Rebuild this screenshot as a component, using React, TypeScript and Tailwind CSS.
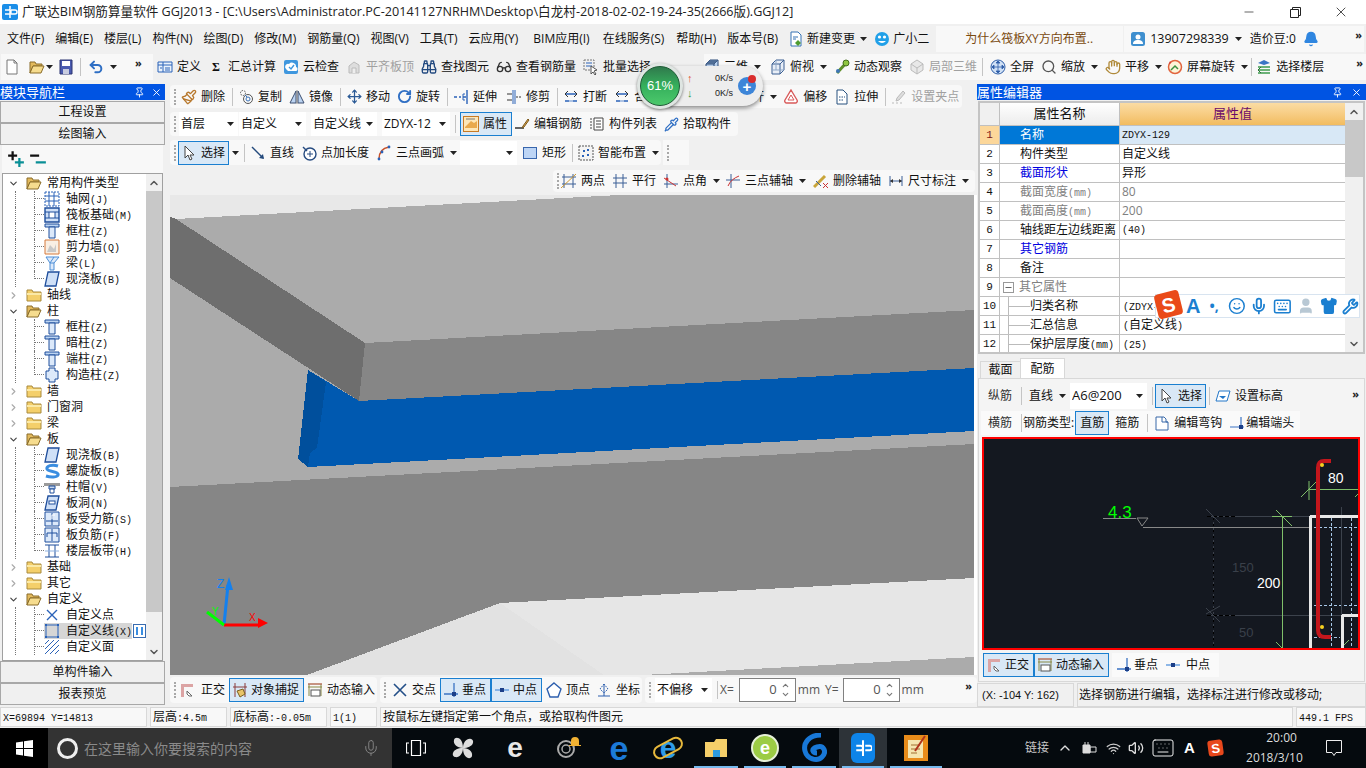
import type { ReactNode } from "react";
import { Binoculars, Glasses, Hand, Search, Undo2, Move, RotateCw, Paintbrush, Pipette, Mic, Keyboard, Smile, Shirt, Wrench, Bell, Pin, X, Minus, ChevronDown, ChevronRight, ChevronUp, User, Wifi, Volume2 } from "lucide-react";

const S = ({ children, s = 16 }: { children: ReactNode; s?: number }) => (
  <svg width={s} height={s} viewBox="0 0 16 16" className="shrink-0">
    {children}
  </svg>
);

const B = "#2a62b8";
const LB = "#bcd4f2";

const icons: Record<string, ReactNode> = {
  doc: <S><path d="M3 1h7l3 3v11H3z" fill="#fff" stroke="#777" /><path d="M10 1v3h3" fill="none" stroke="#777" /></S>,
  open: <S><path d="M1 3h5l1 2h6v2H4l-3 7z" fill="#e2b95c" stroke="#8a6d2a" /><path d="M4 7h11l-3 7H1z" fill="#f6dc8e" stroke="#8a6d2a" /></S>,
  save: <S><path d="M2 1h12v14H2z" fill="#4a5bb0" stroke="#2d3570" /><path d="M4 2h8v5H4z" fill="#fff" /><path d="M5 10h6v5H5z" fill="#c8cce0" /></S>,
  define: <S><path d="M1 3h14v10H1z" fill="#eaf2fb" stroke={B} /><path d="M1 6h14M6 3v10M3 9h2M8 9h5M8 11h5" stroke={B} fill="none" /></S>,
  cloud: <S><rect x="1" y="1" width="14" height="14" rx="2" fill="#3f97de" /><path d="M3 10a3 3 0 0 1 3-5 4 4 0 0 1 7 3 2 2 0 0 1-1 4H5z" fill="#fff" /><path d="M6 8l2 2 3-4" stroke="#3f97de" strokeWidth="1.4" fill="none" /></S>,
  align: <S><path d="M3 14V7l5-4 5 3v8z" fill="#ddd" stroke="#bbb" /><path d="M6 14V9h4v5" fill="#eee" stroke="#bbb" /></S>,
  batch: <S><path d="M1 1h10v10H1z" fill="none" stroke="#777" strokeDasharray="2 1" /><path d="M3 4h6M3 7h6" stroke={B} /><path d="M8 7l6 4-3 1 2 3-1 1-2-3-2 2z" fill="#fff" stroke="#555" /></S>,
  cube: <S><path d="M2 5l4-4h8v10l-4 4H2z" fill={LB} stroke="#2b4a78" /><path d="M2 5h8v10M10 5l4-4" fill="none" stroke="#2b4a78" /><path d="M2 5l4-4h8l-4 4z" fill="#4f6d96" /></S>,
  cube2: <S><path d="M2 5l4-4h8v10l-4 4H2z" fill="#e8eef7" stroke="#3b5f92" /><path d="M2 5h8v10M10 5l4-4" fill="none" stroke="#3b5f92" /><path d="M6 1v10H2M6 11l8 0" fill="none" stroke="#8fa8c8" /></S>,
  orbit: <S><path d="M3 14L13 3" stroke="#5e8f2a" strokeWidth="3" /><circle cx="12" cy="4" r="3" fill="#8fc640" stroke="#446d1d" /><circle cx="4" cy="12" r="2" fill="#3f76b8" /></S>,
  cubeGray: <S><path d="M8 1l6 4v6l-6 4-6-4V5z" fill="#e8e8e8" stroke="#bbb" /><path d="M2 5l6 4 6-4M8 9v6" stroke="#bbb" fill="none" /></S>,
  full: <S><circle cx="8" cy="8" r="7" fill="#cfe0f5" stroke="#2f5ea8" /><path d="M8 2v12M2 8h12M8 2l-2 2h4zM8 14l-2-2h4zM2 8l2-2v4zM14 8l-2-2v4z" fill="#2f5ea8" stroke="#2f5ea8" strokeWidth=".8" /></S>,
  rot: <S><circle cx="8" cy="8" r="6.5" fill="#fdf3d8" stroke="#e1643e" strokeWidth="1.5" /><path d="M4 11l4-4 3 3" stroke="#3a8f3f" fill="none" strokeWidth="1.5" /><path d="M4 4l-2 1 1-3z" fill="#c33" /></S>,
  floors: <S><path d="M2 4l6-3 6 3-6 2z" fill="#3a75c4" /><path d="M2 8h12M2 11h12M2 14h12" stroke="#3e9a4d" strokeWidth="1.6" /><path d="M5 8l-3 3 3 3" fill="none" stroke="#2b6f36" /></S>,
  copy: <S><circle cx="5" cy="4" r="2.5" fill="none" stroke="#555" strokeDasharray="1.5 1" /><circle cx="10" cy="10" r="4.5" fill="none" stroke="#555" /><circle cx="10" cy="10" r="2" fill="none" stroke="#3a72b8" /><path d="M7 6l2 2" stroke="#3a72b8" /></S>,
  mirror: <S><path d="M7 2v12H1zM9 2v12h6z" fill={LB} stroke="#3c4f70" /><path d="M8 1v14" stroke="#888" /></S>,
  extend: <S><path d="M14 1v14M1 8h3M6 8h2M10 8h3" stroke={B} strokeWidth="1.4" /><path d="M12 5h-2v6h2" stroke={B} fill="none" /></S>,
  trim: <S><path d="M7 1v14M9 1v14" stroke={B} /><path d="M1 5h5M1 11h5M10 8h2M13 8h2" stroke="#333" /></S>,
  brk: <S><path d="M2 5h12M2 12h12" stroke={B} strokeWidth="1.4" /><path d="M5 2L2 5l3 3M11 2l3 3-3 3" stroke="#333" fill="none" /><path d="M6 12h4" stroke="#fff" /></S>,
  offset: <S><path d="M8 1l6 10a2 2 0 0 1-2 3H4a2 2 0 0 1-2-3z" fill="#fff" stroke="#d85a5a" strokeWidth="1.4" /><path d="M8 6l3 5H5z" fill="none" stroke="#d85a5a" /></S>,
  stretch: <S><path d="M3 1h6l4 4v10H3z" fill="#fff" stroke="#27517f" /><path d="M5 8h6M5 11h4" stroke="#27517f" strokeDasharray="1.5 1" /></S>,
  grip: <S><path d="M12 2l2 2-6 7-3 1 1-3zM1 14h2M5 14h2M9 14h2" stroke="#bbb" fill="#ddd" /></S>,
  prop: <S><rect x=".5" y=".5" width="15" height="15" fill="#fde6b8" stroke="#c87a24" /><path d="M2 11l6-6 3 2 3-2v7H2z" fill="#e9a94d" /><path d="M3 3h9" stroke="#777" /></S>,
  editbar: <S><path d="M1 12h9" stroke="#333" strokeWidth="1.5" /><path d="M9 10l5-7 1 1-5 7-2 1z" fill="#e0a84c" stroke="#7b5a20" /></S>,
  list: <S><path d="M5 2h9v12H5z" fill="#fff" stroke="#444" /><path d="M1 3h2M1 6h2M1 9h2M1 12h2M7 5h5M7 8h5M7 11h5" stroke="#444" /></S>,
  cursor: <S><path d="M4 1v12l3-3 2 5 2-1-2-4h4z" fill="#fff" stroke="#444" /></S>,
  line: <S><path d="M2 2l11 11" stroke="#244a7c" strokeWidth="1.5" /><path d="M14 14l-5-1 4-4z" fill="#244a7c" /></S>,
  ptlen: <S><circle cx="9" cy="9" r="6" fill="#fff" stroke="#264b80" strokeWidth="1.4" /><path d="M9 6v6M6 9h6" stroke="#264b80" /><path d="M2 2l4 4" stroke="#264b80" strokeWidth="1.4" /></S>,
  arc: <S><path d="M3 14C3 7 7 3 13 2" fill="none" stroke="#c8512a" strokeWidth="1.5" /><circle cx="3" cy="14" r="1.4" fill="#2a62b8" /><circle cx="13" cy="2" r="1.4" fill="#2a62b8" /><circle cx="6" cy="7" r="1.4" fill="#2a62b8" /></S>,
  rect: <S><rect x="1.5" y="2.5" width="13" height="11" fill="#bdd5f5" stroke="#3866ad" /></S>,
  smart: <S><path d="M1 1h14v14H1z" fill="#f4f4f4" stroke="#555" strokeDasharray="2 1" /><path d="M5 5h2v2H5zM9 9h2v2H9zM9 4h2v2H9zM4 10h2v2H4z" fill="#2a62b8" /></S>,
  twopt: <S><path d="M3 1v14M12 1v14M1 4h14M1 11h14" stroke="#3a5f96" /><path d="M0 15L15 1" stroke="#c93" /></S>,
  para: <S><path d="M4 1v14M11 1v14M1 5h14M1 10h14" stroke="#3a5f96" /></S>,
  ang: <S><path d="M4 1v14M1 11h14" stroke="#3a5f96" /><path d="M1 5l12 8" stroke="#c33" /><circle cx="4" cy="6" r="1.5" fill="#c33" /></S>,
  axis3: <S><path d="M6 1v14M1 7h14" stroke="#3a5f96" /><path d="M3 13C5 8 9 5 14 3" stroke="#c33" fill="none" /></S>,
  delaxis: <S><path d="M1 14L12 3" stroke="#c9a53a" strokeWidth="3" /><path d="M3 8l5 5" stroke="#3a5f96" /><path d="M10 10l5 5M15 10l-5 5" stroke="#c33" /></S>,
  dim: <S><path d="M2 3v10M14 3v10M2 8h12" stroke="#3a5f96" /><path d="M2 8l3-2v4zM14 8l-3-2v4z" fill="#333" /></S>,
  ortho: <S><path d="M2 2h12v3H5v10H2z" fill="#dca4a4" /><path d="M8 9l5 5-3 0-2-2z" fill="#fff" stroke="#666" /></S>,
  snap: <S><path d="M3 1v14M13 1v14M1 5h14" stroke="#8a3a3a" /><path d="M5 9l6-2 2 5-5 3z" fill="#e9c468" stroke="#7a5f20" /></S>,
  dyn: <S><path d="M1 2h14M1 5h14M2 2v12M14 2v12" stroke="#884" /><path d="M1 2h14" stroke="#c66" /><rect x="4" y="8" width="9" height="6" fill="#fff" stroke="#555" /></S>,
  cross: <S><path d="M2 2l12 12M14 2L2 14" stroke="#234f88" strokeWidth="1.6" /></S>,
  perp: <S><path d="M1 12h14M11 1v14" stroke="#3a73c4" strokeWidth="1.3" /><rect x="9" y="10" width="4" height="4" fill="#1c3f88" /></S>,
  mid: <S><path d="M1 8h14" stroke="#6aa0e0" strokeWidth="1.5" /><rect x="6" y="6" width="4" height="4" fill="#1c3f88" /></S>,
  vertex: <S><path d="M8 1l7 6-3 8H4L1 7z" fill="#fff" stroke="#2d5fae" strokeWidth="1.4" /></S>,
  coord: <S><path d="M8 2v12M2 14h12" stroke="#2d5fae" /><path d="M8 2l-4 5 4 4 4-4z" fill="none" stroke="#2d5fae" strokeDasharray="1.5 1" /></S>,
  height: <S><path d="M4 3h11l-3 10H1z" fill="#fff" stroke="#2276c8" /><path d="M4 8h7l-3 3z" fill="#2276c8" /></S>,
  hook: <S><path d="M2 2h8l2 2v3h2v8H2z" fill="#fff" stroke="#3969a8" /><path d="M8 2v5h6" fill="none" stroke="#3969a8" /></S>,
  end: <S><path d="M1 12h14M12 2v12" stroke="#3a73c4" strokeWidth="1.2" /><rect x="10" y="10" width="4" height="4" fill="#1c3f88" /></S>,
  newchg: <S><path d="M3 1h7l3 3v11H3z" fill="#fff" stroke="#3673b4" /><path d="M5 6h5M5 8h3" stroke="#3673b4" /><path d="M10 9l3 3-3 3-3-3z" fill="#4f9c2f" /></S>,
  mascot: <S><circle cx="8" cy="8" r="7" fill="#21a0e8" /><circle cx="5.5" cy="6" r="1.6" fill="#fff" /><circle cx="10.5" cy="6" r="1.6" fill="#fff" /><path d="M4 10q4 4 8 0z" fill="#fff" /></S>,
  phone: <S><rect x="1" y="1" width="14" height="14" rx="2.5" fill="#3f8fcf" /><circle cx="8" cy="6" r="2.5" fill="#fff" /><path d="M3 13c0-3 2-4 5-4s5 1 5 4z" fill="#fff" /></S>,
  brand: <S><rect width="16" height="16" rx="2" fill="#1a8ee8" /><path d="M8 2v12M3 6h4a2 2 0 0 1 0 4H3M13 6H9M9 10h4a2 2 0 0 0 0-4" stroke="#fff" strokeWidth="1.5" fill="none" /></S>,
  plus: <S s={18}><path d="M5 1v8M1 5h8" stroke="#111" strokeWidth="2" /><path d="M11 7v8M7 11h8" stroke="#0a8f96" strokeWidth="2" /></S>,
  minus: <S s={18}><path d="M1 5h8" stroke="#111" strokeWidth="2" /><path d="M6 11h9" stroke="#0a8f96" strokeWidth="2" /></S>,
  grid: <S><path d="M1 1h14v14H1z" fill="none" stroke="#2a62b8" strokeDasharray="2 1" /><path d="M5 1v14M10 1v14M1 5h14M1 10h14" stroke="#2a62b8" /></S>,
  raft: <S><path d="M1 1h14v14H1z" fill="#cfe0f7" stroke="#1f4e9c" strokeWidth="1.4" /><path d="M5 5h6v6H5z" fill="#fff" stroke="#1f4e9c" /><path d="M1 5h4M11 5h4M1 11h4M11 11h4" stroke="#1f4e9c" /></S>,
  col: <S><path d="M1 1h14v3H1z" fill="#bcd4f2" stroke="#1f4e9c" /><path d="M5 4h6v11H5z" fill="#dce9fa" stroke="#1f4e9c" /></S>,
  wall: <S><path d="M1 1h14v14H1z" fill="#f9efe4" stroke="#d67a3c" /><path d="M3 13L6 6l4 4 2-5v8z" fill="#c8c8c8" /></S>,
  beam: <S><path d="M2 2h13l-5 6v7H6V8z" fill="#dce9fa" stroke="#4c8ed6" /><path d="M6 8h4M10 2l-4 6" stroke="#4c8ed6" /></S>,
  slab: <S><path d="M4 1h11l-3 14H1z" fill="#cfe0f7" stroke="#1f4e9c" strokeWidth="1.3" /></S>,
  gz: <S><path d="M5 1h6v3h3v8h-3v3H5v-3H2V4h3z" fill="#dce9fa" stroke="#1f4e9c" /></S>,
  spiral: <S><path d="M14 3C8 1 2 3 3 6s10 2 11 5-6 4-12 2" fill="none" stroke="#3a8de0" strokeWidth="3" /></S>,
  cap: <S><path d="M0 4h16v3H0z" fill="#9a9a9a" /><path d="M5 7h6v3H5z" fill="#c8d8ee" stroke="#1f4e9c" /><path d="M6 10h4v4H6z" fill="#fff" stroke="#1f4e9c" /></S>,
  hole: <S><path d="M4 1h11l-3 14H1z" fill="#cfe0f7" stroke="#1f4e9c" strokeWidth="1.3" /><rect x="5" y="6" width="6" height="3" fill="#fff" stroke="#1f4e9c" /></S>,
  rebar: <S><path d="M1 1h14v14H1z" fill="#dce9fa" stroke="#1f4e9c" /><path d="M8 2v12M2 10h12" stroke="#1f4e9c" /><path d="M11 4H8v4" stroke="#fff" fill="none" /></S>,
  neg: <S><path d="M1 1h14v14H1z" fill="#dce9fa" stroke="#1f4e9c" /><path d="M3 6h10v4M3 10V6M8 2v12" stroke="#1f4e9c" fill="none" /></S>,
  band: <S><path d="M1 2h14M1 14h14M5 2v12M11 2v12" stroke="#1f4e9c" /><path d="M1 8h14" stroke="#8fb2e0" /></S>,
  point: <S><path d="M3 3l10 10M13 3L3 13" stroke="#2a62b8" strokeWidth="1.4" /></S>,
  cline: <S><path d="M2 2h12v12H2z" fill="none" stroke="#2a62b8" /><path d="M1 1h2v2H1zM13 1h2v2h-2zM1 13h2v2H1zM13 13h2v2h-2z" fill="#2a62b8" /></S>,
  face: <S><path d="M1 5L5 1M1 10l9-9M1 15L15 1M6 15l9-9M11 15l4-4" stroke="#2a62b8" /></S>,
};

const Caret = ({ className = "" }: { className?: string }) => (
  <svg width="7" height="4" viewBox="0 0 7 4" className={`shrink-0 ${className}`}>
    <path d="M0 0h7L3.5 4z" fill="#222" />
  </svg>
);

const Sep = ({ className = "" }: { className?: string }) => <div className={`w-px h-[18px] bg-[#c4c4c4] shrink-0 ${className}`} />;

const Grip = () => <div className="w-[3px] h-[16px] shrink-0 border-l-2 border-dotted border-[#a8a8a8] ml-[4px]" />;

const More = () => <span className="text-[11px] leading-none font-bold text-[#222] tracking-[-1px]">»</span>;

function Tool({ icon, label, gray, caret, on, gap = "gap-[4px]", className = "" }: { icon?: ReactNode; label: string; gray?: boolean; caret?: boolean; on?: boolean; gap?: string; className?: string }) {
  return (
    <div className={`flex items-center shrink-0 ${gap} whitespace-nowrap ${gray ? "text-[#a0a0a0]" : "text-[#111]"} ${on ? "bg-[#d9e8f6] border border-[#1a7fd0] h-[24px] px-[2px]" : ""} ${className}`}>
      {icon}
      <span>{label}</span>
      {caret && <Caret className="ml-[2px]" />}
    </div>
  );
}

function Drop({ label, className = "" }: { label: string; className?: string }) {
  return (
    <div className={`h-[24px] bg-white flex items-center justify-between pl-[2px] pr-[4px] shrink-0 ${className}`}>
      <span className="whitespace-nowrap overflow-hidden">{label}</span>
      <Caret />
    </div>
  );
}

// ascii in simsun-width mono, the rest in the cjk font
function Sim({ text }: { text: string }) {
  const parts = text.split(/([\x20-\x7e]+)/).filter(Boolean);
  return (
    <>
      {parts.map((p, i) =>
        /^[\x20-\x7e]+$/.test(p) ? (
          <span key={i} className="font-['Liberation_Mono',monospace] text-[10px]">{p}</span>
        ) : (
          <span key={i}>{p}</span>
        )
      )}
    </>
  );
}

const Folder = ({ open }: { open?: boolean }) =>
  open ? (
    icons.open
  ) : (
    <S><path d="M1 3h5l1 2h8v9H1z" fill="#f4cf6a" stroke="#a98a3c" /><path d="M1 6h14v2H1z" fill="#fbe9a6" /></S>
  );

function Group({ label, open }: { label: string; open?: boolean }) {
  return (
    <div className="h-4 flex items-center">
      <div className="w-[23px] flex justify-end pr-[7px] text-[#666]">
        {open ? <ChevronDown size={11} strokeWidth={2.5} className="text-[#444]" /> : <ChevronRight size={11} strokeWidth={2.5} className="text-[#aaa]" />}
      </div>
      <Folder open={open} />
      <span className="ml-[5px] whitespace-nowrap">{label}</span>
    </div>
  );
}

function Leaf({ icon, label, last, sel }: { icon: string; label: string; last?: boolean; sel?: boolean }) {
  return (
    <div className="h-4 flex items-stretch">
      <div className="ml-[12px] w-[19px] border-l border-dotted border-[#777] shrink-0" />
      {last ? (
        <div className="w-[10px] h-[8px] border-l border-b border-dotted border-[#777] shrink-0" />
      ) : (
        <div className="w-[10px] border-l border-dotted border-[#777] shrink-0">
          <div className="h-[8px] border-b border-dotted border-[#777]" />
        </div>
      )}
      <div className={`flex items-center ${sel ? "bg-[#d6d6d6] w-[88px]" : ""}`}>
        {icons[icon]}
        <span className="ml-[6px] whitespace-nowrap"><Sim text={label} /></span>
      </div>
      {sel && (
        <svg width="13" height="14" viewBox="0 0 13 14" className="ml-[1px] self-center shrink-0">
          <rect x=".5" y=".5" width="12" height="13" fill="#fff" stroke="#3a6cb0" />
          <path d="M3 3h2v8H3zM8 3h2v8H8z" fill="#3a8de0" />
        </svg>
      )}
    </div>
  );
}

function NavButton({ label }: { label: string }) {
  return <div className="h-[22px] border border-[#a8a8a8] bg-[#f0f0f0] flex items-center justify-center text-[#111] shrink-0">{label}</div>;
}

function LeftPanel() {
  return (
    <div className="w-[165px] flex flex-col shrink-0 pb-[2px]">
      <div className="h-[16px] mb-[1px] bg-[#0054e3] text-white text-[13px] flex items-center justify-between pr-[3px] leading-none shrink-0">
        <span>模块导航栏</span>
        <div className="flex items-center gap-[6px]">
          <Pin size={11} />
          <X size={11} />
        </div>
      </div>
      <NavButton label="工程设置" />
      <NavButton label="绘图输入" />
      <div className="h-[28px] mx-[2px] bg-[#f8f8f8] flex items-center pl-[5px] gap-[4px] shrink-0">
        {icons.plus}
        {icons.minus}
      </div>
      <div className="flex-1 mx-[2px] border border-[#a0a0a0] bg-white flex min-h-0">
        <div className="flex-1 overflow-hidden pt-[1px] text-[#111]">
          <Group label="常用构件类型" open />
          <Leaf icon="grid" label="轴网(J)" />
          <Leaf icon="raft" label="筏板基础(M)" />
          <Leaf icon="col" label="框柱(Z)" />
          <Leaf icon="wall" label="剪力墙(Q)" />
          <Leaf icon="beam" label="梁(L)" />
          <Leaf icon="slab" label="现浇板(B)" last />
          <Group label="轴线" />
          <Group label="柱" open />
          <Leaf icon="col" label="框柱(Z)" />
          <Leaf icon="col" label="暗柱(Z)" />
          <Leaf icon="col" label="端柱(Z)" />
          <Leaf icon="gz" label="构造柱(Z)" last />
          <Group label="墙" />
          <Group label="门窗洞" />
          <Group label="梁" />
          <Group label="板" open />
          <Leaf icon="slab" label="现浇板(B)" />
          <Leaf icon="spiral" label="螺旋板(B)" />
          <Leaf icon="cap" label="柱帽(V)" />
          <Leaf icon="hole" label="板洞(N)" />
          <Leaf icon="rebar" label="板受力筋(S)" />
          <Leaf icon="neg" label="板负筋(F)" />
          <Leaf icon="band" label="楼层板带(H)" last />
          <Group label="基础" />
          <Group label="其它" />
          <Group label="自定义" open />
          <Leaf icon="point" label="自定义点" />
          <Leaf icon="cline" label="自定义线(X)" sel />
          <Leaf icon="face" label="自定义面" />
        </div>
        <div className="w-[16px] bg-[#f0f0f0] flex flex-col shrink-0 items-stretch">
          <div className="h-[17px] flex items-center justify-center"><ChevronUp size={12} strokeWidth={3} className="text-[#555]" /></div>
          <div className="flex-1 flex flex-col">
            <div className="h-[421px] bg-[#c8c8c8]" />
          </div>
          <div className="h-[17px] flex items-center justify-center"><ChevronDown size={12} strokeWidth={3} className="text-[#555]" /></div>
        </div>
      </div>
      <NavButton label="单构件输入" />
      <NavButton label="报表预览" />
    </div>
  );
}

function Scene() {
  return (
    <svg width="804" height="480" viewBox="170 195 804 480" className="block shrink-0" shapeRendering="crispEdges">
      <rect x="170" y="195" width="804" height="480" fill="#ababab" />
      <polygon points="170,195 619,195 176,219 170,218" fill="#e8e8e8" />
      <polygon points="170,217 176,219 365,343 359,401 170,278" fill="#6e6e6e" />
      <polygon points="365,343 974,310 974,368 359,401" fill="#868686" />
      <polygon points="308,370 359,401 974,368 974,431 308,467" fill="#0059b0" />
      <polygon points="308,370 326,382 317,448 310,453 308,467 298,459" fill="#004f9c" />
      <polygon points="170,487 974,444 974,578 500,603 307,675 170,675" fill="#868686" />
      <polygon points="500,603 974,578 974,657 643,675 307,675" fill="#e6e6e6" />
      <polygon points="500,603 604,675 307,675" fill="#e2e2e2" />
      <g shapeRendering="auto">
        <path d="M224 625L228 585" stroke="#1380ee" strokeWidth="3" />
        <path d="M229 577l-4 13h8z" fill="#1380ee" />
        <text x="217" y="588" fill="#1380ee" fontSize="12" fontFamily="Liberation Sans">Z</text>
        <path d="M224 625H258" stroke="#f00" strokeWidth="3" />
        <path d="M268 623l-10-5v10z" fill="#f00" />
        <text x="249" y="621" fill="#f00" fontSize="10" fontFamily="Liberation Sans">X</text>
        <path d="M224 625L207 612" stroke="#0f0" strokeWidth="3" />
        <text x="212" y="615" fill="#0f0" fontSize="10" fontFamily="Liberation Sans">Y</text>
      </g>
    </svg>
  );
}

function RebarView() {
  return (
    <div className="h-[213px] ml-[3px] mr-[4px] border-2 border-[#f00] bg-[#141820] overflow-hidden shrink-0">
      <svg width="374" height="209" viewBox="984 439 374 209" className="block" shapeRendering="crispEdges">
        <path d="M1207 516H1358M1207 615H1341" stroke="#3c424c" />
        <path d="M1207 516h30M1207 615h30" stroke="#000" strokeDasharray="4 2" />
        <path d="M1213 516V648" stroke="#000" strokeDasharray="4 2" />
        <path d="M1213 516V648" stroke="#3c424c" strokeDasharray="2 4" />
        <path d="M1143 527H1309" stroke="#888" />
        <path d="M1103 518H1136" stroke="#888" />
        <path d="M1137 518H1148L1142 526z" fill="none" stroke="#888" shapeRendering="auto" />
        <path d="M1282 516V648M1272 516H1292M1309 489H1358" stroke="#7fbf6a" />
        <path d="M1276 510L1292 526M1309 481V500M1301 497L1316 482M1355 497l4-4M1276 642l6 6M1341 648l8-8" stroke="#7fbf6a" shapeRendering="auto" />
        <path d="M1206 509l14 14M1206 614l14 -8M1206 608l14 14" stroke="#3c424c" shapeRendering="auto" />
        <path d="M1331 518V648M1351 518V648M1309 527H1358M1309 605H1358M1309 637H1340" stroke="#a8c8e8" strokeDasharray="3 2" />
        <path d="M1341 507V615" stroke="#3c424c" />
        <path d="M1310 516V648M1310 516H1358M1342 615V648M1342 615H1358" stroke="#e8e8e8" strokeWidth="3" />
        <path d="M1331 461H1324Q1318 461 1318 468V630Q1318 637 1325 637H1331" fill="none" stroke="#c4161c" strokeWidth="4" shapeRendering="auto" />
        <circle cx="1322" cy="465" r="2" fill="#f5d020" shapeRendering="auto" />
        <circle cx="1322" cy="627" r="2" fill="#f5d020" shapeRendering="auto" />
        <g shapeRendering="auto" fontFamily="Liberation Sans" fontSize="14">
          <text x="1108" y="518" fill="#0f0" fontSize="17">4.3</text>
          <text x="1328" y="483" fill="#fff">80</text>
          <text x="1257" y="588" fill="#fff">200</text>
          <text x="1232" y="572" fill="#3a404a" fontSize="13">150</text>
          <text x="1239" y="637" fill="#3a404a" fontSize="13">50</text>
        </g>
      </svg>
    </div>
  );
}

const rows: { n: number; name: string; val?: string; color?: string; vColor?: string }[] = [
  { n: 2, name: "构件类型", val: "自定义线" },
  { n: 3, name: "截面形状", val: "异形", color: "text-[#0000e0]" },
  { n: 4, name: "截面宽度(mm)", val: "80", color: "text-[#808080]", vColor: "text-[#808080]" },
  { n: 5, name: "截面高度(mm)", val: "200", color: "text-[#808080]", vColor: "text-[#808080]" },
  { n: 6, name: "轴线距左边线距离", val: "(40)" },
  { n: 7, name: "其它钢筋", color: "text-[#0000e0]" },
  { n: 8, name: "备注" },
];

const treeRows = [
  { n: 10, name: "归类名称", val: "(ZDYX-" },
  { n: 11, name: "汇总信息", val: "(自定义线)" },
  { n: 12, name: "保护层厚度(mm)", val: "(25)" },
];

const rowLine = "h-[19px] flex border-b border-[#c0c0c0] shrink-0";
const numCell = "w-[20px] border-r border-[#c0c0c0] flex items-center justify-center text-[11px] font-['Liberation_Mono',monospace] shrink-0";

function PropGrid() {
  return (
    <div className="h-[253px] mx-[1px] border-2 border-[#c4c4c4] bg-white flex text-[#111] overflow-hidden shrink-0">
      <div className="flex-1 flex flex-col min-w-0">
        <div className="h-[23px] flex border-b border-[#c0c0c0] shrink-0">
          <div className="w-[20px] bg-[#f0f0f0] border-r border-[#c0c0c0]" />
          <div className="w-[120px] bg-gradient-to-b from-white to-[#ececec] border-r border-[#c0c0c0] flex items-center justify-center text-[13px]">属性名称</div>
          <div className="flex-1 bg-gradient-to-b from-[#fbdca4] to-[#f2bc5e] flex items-center justify-center text-[13px] text-[#6a0a6a]">属性值</div>
        </div>
        <div className={rowLine}>
          <div className={`${numCell} bg-[#fcd79a] text-[#7a1a1a]`}>1</div>
          <div className="w-[120px] bg-[#0078d7] text-white border-r border-[#c0c0c0] pl-[20px] flex items-center">名称</div>
          <div className="flex-1 bg-[#d8e8f6] pl-[2px] flex items-center font-['Liberation_Mono',monospace] text-[10px]">ZDYX-129</div>
        </div>
        {rows.map((r) => (
          <div key={r.n} className={rowLine}>
            <div className={numCell}>{r.n}</div>
            <div className={`w-[120px] border-r border-[#c0c0c0] pl-[20px] flex items-center whitespace-nowrap ${r.color ?? ""}`}>
              <span><Sim text={r.name} /></span>
            </div>
            <div className={`flex-1 pl-[2px] flex items-center ${r.vColor ?? ""}`}>{r.val === "(40)" ? <Sim text={r.val} /> : r.val}</div>
          </div>
        ))}
        <div className={rowLine}>
          <div className={numCell}>9</div>
          <div className="w-[120px] border-r border-[#c0c0c0] pl-[3px] flex items-center gap-[5px] text-[#808080]">
            <div className="w-[11px] h-[11px] border border-[#999] flex items-center justify-center text-[#333]">
              <Minus size={9} strokeWidth={2} />
            </div>
            其它属性
          </div>
          <div className="flex-1" />
        </div>
        {treeRows.map((r) => (
          <div key={r.n} className={rowLine}>
            <div className={numCell}>{r.n}</div>
            <div className="w-[120px] border-r border-[#c0c0c0] flex items-stretch whitespace-nowrap">
              <div className="ml-[8px] w-[22px] border-l border-[#bbb] h-full shrink-0">
                <div className="h-[10px] border-b border-[#bbb]" />
              </div>
              <span className="self-center"><Sim text={r.name} /></span>
            </div>
            <div className="flex-1 pl-[3px] flex items-center"><span><Sim text={r.val} /></span></div>
          </div>
        ))}
      </div>
      <div className="w-[18px] bg-[#f0f0f0] flex flex-col shrink-0">
        <div className="h-[17px] flex items-center justify-center"><ChevronUp size={12} strokeWidth={3} className="text-[#555]" /></div>
        <div className="h-[57px] bg-[#c8c8c8]" />
        <div className="flex-1" />
        <div className="h-[17px] flex items-center justify-center"><ChevronDown size={12} strokeWidth={3} className="text-[#555]" /></div>
      </div>
    </div>
  );
}

function RightPanel() {
  return (
    <div className="w-[389px] flex flex-col shrink-0">
      <div className="h-[16px] mb-[1px] bg-[#0054e3] text-white text-[13px] flex items-center justify-between pr-[4px] leading-none shrink-0">
        <span>属性编辑器</span>
        <div className="flex items-center gap-[8px]">
          <Pin size={11} />
          <X size={11} />
        </div>
      </div>
      <PropGrid />
      <div className="h-[21px] flex items-end pl-[3px] mt-[3px] shrink-0">
        <div className="w-[40px] h-[17px] flex items-center justify-center bg-[#f0f0f0] border-t border-l border-[#d8d8d8]">截面</div>
        <div className="w-[45px] h-[21px] flex items-center justify-center bg-white border border-b-0 border-[#d8d8d8] -mb-[1px]">配筋</div>
      </div>
      <div className="h-[304px] border border-[#d8d8d8] bg-[#f4f4f4] flex flex-col shrink-0 mx-[1px]">
        <div className="h-[29px] mt-[2px] flex items-center pl-[9px] shrink-0">
          <span className="text-[#333]">纵筋</span>
          <Sep className="ml-[9px]" />
          <span className="ml-[7px]">直线</span>
          <Caret className="ml-[6px]" />
          <Drop label="A6@200" className="w-[77px] h-[26px] ml-[4px] text-[13px]" />
          <Sep className="ml-[5px]" />
          <Tool on icon={icons.cursor} label="选择" className="ml-[2px] w-[51px]" />
          <Sep className="ml-[3px]" />
          <Tool icon={icons.height} label="设置标高" className="ml-[5px]" />
          <div className="ml-auto pr-[6px] self-start pt-[4px]"><More /></div>
        </div>
        <div className="h-[24px] mt-[1px] w-[319px] ml-[2px] bg-[#fafafa] flex items-center pl-[7px] shrink-0">
          <span className="text-[#333]">横筋</span>
          <Sep className="ml-[9px]" />
          <span className="whitespace-nowrap ml-[1px]">钢筋类型:</span>
          <Tool on label="直筋" className="px-[4px] ml-[1px]" />
          <span className="ml-[6px]">箍筋</span>
          <Sep className="ml-[8px] mr-[6px]" />
          <Tool icon={icons.hook} label="编辑弯钩" />
          <Tool icon={icons.end} label="编辑端头" gap="gap-[1px]" className="ml-[7px]" />
        </div>
        <div className="h-[2px] shrink-0" />
        <RebarView />
        <div className="h-[26px] mt-[2px] flex items-center pl-[4px] shrink-0">
          <Tool on icon={icons.ortho} label="正交" gap="gap-[3px]" className="w-[51px]" />
          <Tool on icon={icons.dyn} label="动态输入" gap="gap-[3px]" className="w-[75px]" />
          <div className="h-[24px] w-[107px] bg-[#fafafa] ml-[3px] flex items-center pl-[4px]">
            <Tool icon={icons.perp} label="垂点" gap="gap-[2px]" />
            <Tool icon={icons.mid} label="中点" gap="gap-[5px]" className="ml-[7px]" />
          </div>
        </div>
      </div>
      <div className="h-[24px] mt-[1px] flex gap-[3px] text-[11px] shrink-0">
        <div className="w-[97px] border border-[#d8d8d8] flex items-center pl-[4px] font-['Liberation_Sans',sans-serif] whitespace-nowrap">(X: -104 Y: 162)</div>
        <div className="flex-1 border border-[#d8d8d8] flex items-center pl-[1px] text-[12px] whitespace-nowrap">选择钢筋进行编辑，选择标注进行修改或移动;</div>
      </div>
    </div>
  );
}

const Spin = ({ className = "" }: { className?: string }) => (
  <div className={`w-[57px] h-[24px] border border-[#808080] bg-white flex items-center justify-end text-[#555] shrink-0 ${className}`}>
    <span className="text-[13px]">0</span>
    <div className="w-[18px] flex flex-col items-center text-[#777]">
      <ChevronUp size={9} strokeWidth={3} />
      <ChevronDown size={9} strokeWidth={3} />
    </div>
  </div>
);

function CenterPanel() {
  const bar = "bg-[#f8f8f8] flex items-center shrink-0 rounded-sm";
  return (
    <div className="w-[807px] ml-[5px] flex flex-col shrink-0 text-[#111]">
      <div className={`${bar} gap-[7px] h-[23px] mt-[1px] w-[792px] pr-[6px]`}>
        <Grip />
        <Tool icon={<Paintbrush size={16} className="text-[#b8792e]" />} label="删除" className="ml-[-3px]" />
        <Sep />
        <Tool icon={icons.copy} label="复制" className="ml-[-2px]" />
        <Tool icon={icons.mirror} label="镜像" />
        <Sep />
        <Tool icon={<Move size={15} className="text-[#2b5a96]" />} label="移动" className="ml-[-1px]" />
        <Tool icon={<RotateCw size={15} strokeWidth={3} className="text-[#2f6fc4]" />} label="旋转" />
        <Sep />
        <Tool icon={icons.extend} label="延伸" className="ml-[-2px]" />
        <Tool icon={icons.trim} label="修剪" className="ml-[2px]" />
        <Sep />
        <Tool icon={icons.brk} label="打断" className="ml-[-2px]" />
        <Tool icon={icons.brk} label="合并" />
        <Tool icon={icons.brk} label="分割" />
        <Tool icon={icons.brk} label="打开" caret className="ml-[4px]" />
        <Tool icon={icons.offset} label="偏移" className="ml-[-1px]" />
        <Tool icon={icons.stretch} label="拉伸" />
        <Sep />
        <Tool icon={icons.grip} label="设置夹点" gray className="ml-[-2px]" />
      </div>
      <div className={`${bar} gap-[1px] h-[24px] mt-[4px] w-[568px]`}>
        <Grip />
        <Drop label="首层" className="w-[59px] ml-[1px]" />
        <Drop label="自定义" className="w-[67px]" />
        <Drop label="自定义线" className="w-[66px] ml-[4px]" />
        <Drop label="ZDYX-12" className="w-[68px] ml-[4px]" />
        <Sep className="ml-[4px] mr-[3px]" />
        <Tool on icon={icons.prop} label="属性" className="w-[52px]" />
        <Tool icon={icons.editbar} label="编辑钢筋" className="ml-[1px]" />
        <Tool icon={icons.list} label="构件列表" className="ml-[6px]" />
        <Tool icon={<Pipette size={15} className="text-[#2f6fc4]" />} label="拾取构件" className="ml-[6px]" />
      </div>
      <div className="flex mt-[4px] shrink-0 gap-[2px]">
        <div className={`${bar} h-[25px] w-[491px]`}>
          <Grip />
          <Tool on icon={icons.cursor} label="选择" className="w-[51px] ml-[1px]" />
          <Caret className="ml-[3px]" />
          <Sep className="ml-[5px]" />
          <Tool icon={icons.line} label="直线" className="ml-[5px]" />
          <Tool icon={icons.ptlen} label="点加长度" className="ml-[7px]" />
          <Tool icon={icons.arc} label="三点画弧" caret className="ml-[7px]" />
          <Drop label="" className="w-[57px] ml-[3px]" />
          <Tool icon={icons.rect} label="矩形" className="ml-[5px]" />
          <Sep className="ml-[6px]" />
          <Tool icon={icons.smart} label="智能布置" caret className="ml-[5px]" />
        </div>
        <div className="w-[26px] h-[25px] bg-[#f8f8f8] flex items-center"><Grip /></div>
      </div>
      <div className="flex justify-end mt-[5px] shrink-0 pr-[2px]">
        <div className={`${bar} gap-[7px] h-[22px] w-[422px]`}>
          <Grip />
          <Tool icon={icons.twopt} label="两点" className="ml-[-6px]" />
          <Tool icon={icons.para} label="平行" />
          <Tool icon={icons.ang} label="点角" caret />
          <Tool icon={icons.axis3} label="三点辅轴" caret className="ml-[-2px]" />
          <Tool icon={icons.delaxis} label="删除辅轴" />
          <Tool icon={icons.dim} label="尺寸标注" caret />
        </div>
      </div>
      <div className="mt-[3px] shrink-0 bg-white"><Scene /></div>
      <div className="h-[28px] mt-[2px] flex gap-[3px] shrink-0">
        <div className={`${bar} h-[26px] w-[207px]`}>
          <Grip />
          <Tool icon={icons.ortho} label="正交" gap="gap-[6px]" className="ml-[2px]" />
          <Tool on icon={icons.snap} label="对象捕捉" gap="gap-[3px]" className="w-[75px] ml-[4px]" />
          <Tool icon={icons.dyn} label="动态输入" className="ml-[3px]" />
        </div>
        <div className={`${bar} h-[26px] w-[262px]`}>
          <Grip />
          <Tool icon={icons.cross} label="交点" className="ml-[5px]" />
          <Tool on icon={icons.perp} label="垂点" gap="gap-[3px]" className="w-[51px] ml-[4px]" />
          <Tool on icon={icons.mid} label="中点" gap="gap-[3px]" className="w-[51px]" />
          <Tool icon={icons.vertex} label="顶点" className="ml-[4px]" />
          <Tool icon={icons.coord} label="坐标" className="ml-[6px]" />
        </div>
        <div className="bg-[#f8f8f8] h-[26px] flex-1 flex items-center text-[#555] rounded-sm">
          <Grip />
          <Drop label="不偏移" className="w-[57px] ml-[3px] text-[#111]" />
          <Sep className="ml-[5px]" />
          <span className="ml-[2px]">X=</span>
          <Spin className="ml-[5px]" />
          <span className="ml-[2px]">mm</span>
          <span className="ml-[5px]">Y=</span>
          <Spin className="ml-[4px]" />
          <span className="ml-[2px]">mm</span>
          <div className="ml-auto mr-[6px] self-start"><More /></div>
        </div>
      </div>
    </div>
  );
}

const menus = [
  { t: "文件(F)" },
  { t: "编辑(E)" },
  { t: "楼层(L)" },
  { t: "构件(N)" },
  { t: "绘图(D)" },
  { t: "修改(M)" },
  { t: "钢筋量(Q)" },
  { t: "视图(V)" },
  { t: "工具(T)" },
  { t: "云应用(Y)" },
  { t: "BIM应用(I)", c: "ml-[4px]" },
  { t: "在线服务(S)", c: "ml-[2px]" },
  { t: "帮助(H)", c: "ml-[1px]" },
  { t: "版本号(B)" },
];

function TopBars() {
  return (
    <>
      <div className="h-[24px] bg-white flex items-center shrink-0 text-[#222]">
        <div className="ml-[2px] mr-[4px]">{icons.brand}</div>
        <span className="text-[12.6px] whitespace-nowrap">广联达BIM钢筋算量软件 GGJ2013 - [C:\Users\Administrator.PC-20141127NRHM\Desktop\白龙村-2018-02-02-19-24-35(2666版).GGJ12]</span>
        <div className="ml-auto flex items-center text-[#222]">
          <Minus size={14} strokeWidth={1.2} className="mr-[34px]" />
          <svg width="11" height="11" viewBox="0 0 11 11" className="mr-[32px]"><path d="M.5 2.5h8v8h-8zM2.5 2.5v-2h8v8h-2" fill="none" stroke="#222" /></svg>
          <X size={16} strokeWidth={1.2} className="mr-[17px]" />
        </div>
      </div>
      <div className="h-[30px] flex items-center pl-[7px] gap-[11px] shrink-0 text-[#111]">
        {menus.map((m) => (
          <span key={m.t} className={`whitespace-nowrap ${m.c ?? ""}`}>{m.t}</span>
        ))}
        <Tool icon={icons.newchg} label="新建变更" caret gap="gap-[3px]" className="ml-[-1px]" />
        <Tool icon={icons.mascot} label="广小二" gap="gap-[3px]" className="ml-[-4px]" />
        <div className="w-[187px] h-[26px] bg-[#f8f8f8] flex items-center pl-[29px] ml-[-4px] text-[#7a4a10] whitespace-nowrap">为什么筏板XY方向布置..</div>
        <div className="flex items-center h-[26px] bg-[#f8f8f8] flex-1 ml-[-10px] pl-[6px] mr-[2px]">
          {icons.phone}
          <span className="ml-[4px] text-[12.5px]">13907298339</span>
          <Caret className="ml-[6px]" />
          <span className="ml-[8px]">造价豆:0</span>
          <Bell size={16} fill="#2f86e0" className="text-[#2f86e0] ml-[7px]" />
          <div className="ml-auto pr-[3px] self-start"><More /></div>
        </div>
      </div>
      <div className="h-[26px] flex items-center shrink-0 gap-[1px]">
        <div className="w-[152px] h-full ml-[1px] bg-[#f8f8f8] flex items-center">
          <div className="ml-[3px]">{icons.doc}</div>
          <div className="ml-[9px]">{icons.open}</div>
          <Caret className="ml-[1px]" />
          <div className="ml-[5px]">{icons.save}</div>
          <Sep className="ml-[6px]" />
          <Undo2 size={16} strokeWidth={3} className="text-[#2f6fc4] ml-[7px]" />
          <Caret className="ml-[6px]" />
          <div className="ml-[18px] self-start"><More /></div>
        </div>
        <div className="h-full flex items-center gap-[7px] pl-[3px] w-[546px]">
          <Tool icon={icons.define} label="定义" />
          <Tool icon={<span className="w-4 text-center font-bold font-['Liberation_Serif',serif]">Σ</span>} label="汇总计算" />
          <Tool icon={icons.cloud} label="云检查" />
          <Tool icon={icons.align} label="平齐板顶" gray />
          <Tool icon={<Binoculars size={16} className="text-[#234a80]" />} label="查找图元" />
          <Tool icon={<Glasses size={16} className="text-[#333]" />} label="查看钢筋量" />
          <Tool icon={icons.batch} label="批量选择" />
        </div>
        <div className="h-full flex items-center bg-[#f8f8f8] flex-1 ml-[3px] gap-[7px]">
          <Tool icon={icons.cube} label="三维" caret />
          <Tool icon={icons.cube2} label="俯视" caret className="ml-[2px]" />
          <Tool icon={icons.orbit} label="动态观察" />
          <Tool icon={icons.cubeGray} label="局部三维" gray />
          <Sep className="ml-[-2px]" />
          <Tool icon={icons.full} label="全屏" />
          <Tool icon={<Search size={16} className="text-[#555]" />} label="缩放" caret />
          <Tool icon={<Hand size={16} className="text-[#b08a3a]" />} label="平移" caret />
          <Tool icon={icons.rot} label="屏幕旋转" caret className="ml-[-2px]" />
          <Sep className="ml-[-4px]" />
          <Tool icon={icons.floors} label="选择楼层" className="ml-[-3px]" />
          <div className="ml-auto pr-[4px] self-start"><More /></div>
        </div>
      </div>
      <div className="h-[4px] shrink-0" />
    </>
  );
}

function StatusBar() {
  const c = "h-[20px] border border-[#d8d8d8] bg-[#f8f8f8] flex items-center pl-[2px] whitespace-nowrap text-[#111] shrink-0";
  return (
    <div className="h-[21px] flex gap-[3px] shrink-0">
      <div className={`${c} w-[147px]`}><span><Sim text="X=69894 Y=14813" /></span></div>
      <div className={`${c} w-[77px]`}><span><Sim text="层高:4.5m" /></span></div>
      <div className={`${c} w-[97px]`}><span><Sim text="底标高:-0.05m" /></span></div>
      <div className={`${c} w-[47px]`}><span><Sim text="1(1)" /></span></div>
      <div className={`${c} flex-1 shrink`}>按鼠标左键指定第一个角点，或拾取构件图元</div>
      <div className={`${c} w-[70px]`}><span><Sim text="449.1 FPS" /></span></div>
    </div>
  );
}

function Taskbar() {
  const app = "h-full flex items-center justify-center shrink-0 relative";
  const under = <div className="absolute bottom-0 left-[3px] right-[3px] h-[2px] bg-[#76b9ed]" />;
  const eLetter = "font-['Liberation_Sans',sans-serif] font-bold leading-none";
  return (
    <div className="h-[40px] bg-[#050a0e] flex items-center text-white shrink-0">
      <div className="w-[48px] h-full bg-black flex items-center justify-center shrink-0">
        <svg width="17" height="17" viewBox="0 0 17 17"><path d="M0 2.5l7-1v6.500H0zM8 1.300L17 0v8H8zM0 9h7v6.500l-7-1zM8 9h9v8l-9-1.300z" fill="#fff" /></svg>
      </div>
      <div className="w-[344px] h-full bg-[#333] flex items-center pl-[9px] shrink-0">
        <div className="w-[21px] h-[21px] rounded-full border-[3px] border-[#eee]" />
        <span className="ml-[6px] text-[14px] text-[#8a8a8a]">在这里输入你要搜索的内容</span>
        <Mic size={18} strokeWidth={1.2} className="ml-auto mr-[12px] text-[#8a8a8a]" />
      </div>
      <div className="w-[47px] flex justify-center">
        <svg width="20" height="18" viewBox="0 0 20 18"><path d="M5.500 1.500h9v15h-9zM3 4H.5v10H3M17 4h2.500v10H17" fill="none" stroke="#fff" strokeWidth="1.2" /></svg>
      </div>
      <div className={`${app} w-[48px]`}>
        <svg width="26" height="26" viewBox="0 0 26 26"><path d="M13 13C7 13 3 9 4 5s9-3 9 8zM13 13c0-6 4-10 8-9s3 9-8 9zM13 13c6 0 10 4 9 8s-9 3-9-8zM13 13c0 6-4 10-8 9s-3-9 8-9z" fill="#ddd" /></svg>
      </div>
      <div className={`${app} w-[56px]`}><span className={`${eLetter} text-[28px] text-[#e8e8e8]`}>e</span></div>
      <div className={`${app} w-[50px]`}>
        <svg width="28" height="28" viewBox="0 0 28 28"><circle cx="12" cy="15" r="8" fill="none" stroke="#aaa" strokeWidth="2" /><circle cx="12" cy="15" r="4" fill="none" stroke="#aaa" strokeWidth="1.500" /><path d="M21 3a4 4 0 0 1 4 4v4h2v1H15v-1h2V7a4 4 0 0 1 4-4z" fill="#f2b233" /></svg>
      </div>
      <div className={`${app} w-[52px]`}><span className={`${eLetter} text-[#1c7ad8] text-[34px]`}>e</span></div>
      <div className={`${app} w-[46px]`}>
        <span className={`${eLetter} text-[#2f9be8] text-[30px]`}>e</span>
        <div className="absolute w-[32px] h-[14px] rounded-full border-2 border-[#e8b93c] rotate-[-28deg]" />
      </div>
      <div className={`${app} w-[50px]`}>
        <svg width="24" height="22" viewBox="0 0 24 22"><path d="M1 5h9l2-3h11v18H1z" fill="#f5cf6a" /><path d="M9 20v-7h7v7z" fill="#2d9be0" /></svg>
        {under}
      </div>
      <div className={`${app} w-[48px]`}>
        <div className="w-[28px] h-[28px] rounded-full bg-[#9ccc45] border-2 border-[#e6f0d8] flex items-center justify-center"><span className="text-white font-bold text-[18px] leading-none font-['Liberation_Sans',sans-serif]">e</span></div>
        {under}
      </div>
      <div className={`${app} w-[50px]`}>
        <svg width="26" height="30" viewBox="0 0 26 30"><path d="M20 2C8 2 2 10 4 18s12 11 17 6 2-12-5-10-4 6 0 6" fill="none" stroke="#1878d8" strokeWidth="5" /></svg>
        {under}
      </div>
      <div className={`${app} w-[48px] bg-[#2d3338]`}>
        <div className="w-[24px] h-[30px] rounded-md bg-[#0e84e8] flex items-center justify-center">
          <svg width="18" height="18" viewBox="0 0 16 16"><path d="M8 1v14M2 6h4a2 2 0 0 1 0 4H2M14 6h-4M10 10h4a2 2 0 0 0 0-4" stroke="#fff" strokeWidth="1.8" fill="none" /></svg>
        </div>
        {under}
      </div>
      <div className={`${app} w-[58px]`}>
        <svg width="26" height="30" viewBox="0 0 26 30"><path d="M1 2h24v26H1z" fill="#e88c1a" /><path d="M5 7h15v18H5z" fill="#f5e6b0" /><path d="M8 12h9M8 16h9M8 20h6" stroke="#a07030" /><path d="M12 18L22 3" stroke="#b0341c" strokeWidth="2" /></svg>
        {under}
      </div>
      <div className="flex-1 h-full flex items-center min-w-0 pl-[80px]">
        <span className="text-[12px] text-[#c8c8c8] whitespace-nowrap">链接</span>
        <ChevronUp size={16} className="ml-[8px] text-[#ddd]" />
        <svg width="16" height="14" viewBox="0 0 16 14" className="ml-[8px]"><path d="M4 1v3M7 1v3M2 4h7v8H2z" fill="#ddd" stroke="#ddd" /><path d="M9 6h6v5H9z" fill="none" stroke="#ddd" /></svg>
        <Wifi size={15} className="ml-[9px] text-[#ccc]" />
        <Volume2 size={16} className="ml-[7px] text-[#ddd]" />
        <Keyboard size={24} strokeWidth={1} className="ml-[7px] text-[#eee]" />
        <span className="ml-[9px] text-[15px] font-bold font-['Liberation_Sans',sans-serif]">A</span>
        <div className="ml-[13px] w-[15px] h-[16px] bg-[#e8481c] rounded-[3px] rotate-[-8deg] flex items-center justify-center text-white text-[13px] font-bold leading-none font-['Liberation_Sans',sans-serif]">S</div>
        <div className="ml-[18px] w-[62px] flex flex-col items-end text-[12px] text-[#ddd] leading-[20px] whitespace-nowrap">
          <span className="mr-[6px]">20:00</span>
          <span>2018/3/10</span>
        </div>
        <svg width="16" height="16" viewBox="0 0 16 16" className="ml-[23px]"><path d="M.5 .5h15v12H10l-2 3-2-3H.5z" fill="none" stroke="#eee" /></svg>
      </div>
    </div>
  );
}

function NetWidget() {
  return (
    <div className="absolute left-[637px] top-[63px] w-[127px] h-[46px] flex items-center">
      <div className="absolute left-[30px] top-[3px] w-[96px] h-[40px] rounded-r-[20px] bg-[#ededed] shadow-[0_2px_4px_rgba(0,0,0,0.45)] flex items-center">
        <div className="flex flex-col gap-[2px] ml-[20px] w-[46px] text-[9px] leading-[13px] text-[#222] font-['Liberation_Sans',sans-serif]">
          <div className="flex justify-between"><span className="text-[#e05030] text-[11px] font-bold">↑</span><span>0K/s</span></div>
          <div className="flex justify-between"><span className="text-[#2f9a44] text-[11px] font-bold">↓</span><span>0K/s</span></div>
        </div>
      </div>
      <div className="relative w-[46px] h-[46px] rounded-full bg-[#dfe5e2] shadow-[0_1px_3px_rgba(0,0,0,0.5)] flex items-center justify-center">
        <div className="w-[40px] h-[40px] rounded-full border border-[#1c5a34] bg-gradient-to-b from-[#2f7a4c] via-[#35b05c] to-[#4cc96c] flex items-center justify-center text-white text-[13px] font-['Liberation_Sans',sans-serif]">61%</div>
      </div>
      <div className="absolute left-[101px] top-[14px] w-[18px] h-[18px] rounded-full bg-[#3d85d8] flex items-center justify-center text-white text-[15px] font-bold leading-none font-['Liberation_Sans',sans-serif]">+</div>
      <div className="absolute left-[111px] top-[12px] w-[8px] h-[8px] rounded-full bg-[#d92c2c]" />
    </div>
  );
}

function ImeBar() {
  return (
    <div className="absolute left-[1155px] top-[294px] w-[205px] h-[24px] bg-white border border-[#d8e4f0] flex items-center text-[#1b7fd0] gap-[5px] pl-[30px]">
      <div className="absolute left-[0px] top-[-3px] w-[25px] h-[25px] rounded-[4px] bg-[#ea4a18] rotate-[-14deg] flex items-center justify-center text-white font-bold text-[20px] leading-none font-['Liberation_Sans',sans-serif]">S</div>
      <span className="text-[20px] font-bold leading-none font-['Liberation_Sans',sans-serif]">A</span>
      <span className="text-[14px] font-bold leading-none mx-[4px]">•,</span>
      <Smile size={18} strokeWidth={2} />
      <Mic size={18} strokeWidth={2.4} />
      <Keyboard size={19} strokeWidth={2} />
      <User size={18} fill="#b8c8d4" className="text-[#b8c8d4]" />
      <Shirt size={18} fill="#1b7fd0" />
      <Wrench size={17} strokeWidth={2.6} />
    </div>
  );
}

export default function App() {
  return (
    <div className="relative w-[1366px] h-[768px] overflow-hidden bg-[#f0f0f0] flex flex-col text-[12px] text-[#111] font-['Open_Sans','Noto_Sans_CJK_SC',sans-serif]">
      <TopBars />
      <div className="h-[623px] flex shrink-0">
        <LeftPanel />
        <CenterPanel />
        <RightPanel />
      </div>
      <StatusBar />
      <Taskbar />
      <NetWidget />
      <ImeBar />
    </div>
  );
}
